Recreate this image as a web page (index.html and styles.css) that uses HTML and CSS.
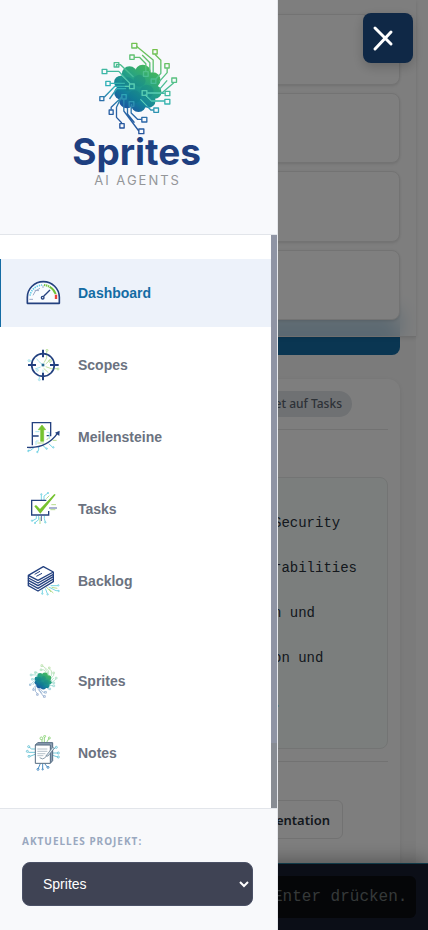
FILE: index.html
```html
<!DOCTYPE html>
<html lang="de">
<head>
<meta charset="utf-8">
<meta name="viewport" content="width=device-width, initial-scale=1">
<title>Sprites</title>
<link rel="stylesheet" href="styles.css">
</head>
<body>
<svg class="defs" aria-hidden="true">
  <defs>
    <linearGradient id="circuit" gradientUnits="userSpaceOnUse" x1="290" y1="50" x2="190" y2="300">
      <stop offset="0" stop-color="#7ac143"/><stop offset=".3" stop-color="#52c08a"/>
      <stop offset=".6" stop-color="#2fb0b8"/><stop offset=".8" stop-color="#2b68a8"/><stop offset="1" stop-color="#24509a"/>
    </linearGradient>
    <linearGradient id="brainfill" gradientUnits="userSpaceOnUse" x1="275" y1="115" x2="195" y2="230">
      <stop offset="0" stop-color="#43b75c"/><stop offset=".4" stop-color="#24a087"/>
      <stop offset=".75" stop-color="#127f9b"/><stop offset="1" stop-color="#1c58a0"/>
    </linearGradient>
    <g id="blob">
      <g fill="url(#brainfill)">
        <circle cx="210" cy="132" r="23"/><circle cx="250" cy="128" r="24"/><circle cx="280" cy="150" r="23"/>
        <circle cx="286" cy="186" r="20"/><circle cx="266" cy="212" r="22"/><circle cx="237" cy="223" r="23"/>
        <circle cx="202" cy="212" r="23"/><circle cx="184" cy="188" r="20"/><circle cx="184" cy="157" r="20"/>
        <circle cx="232" cy="174" r="52"/>
      </g>
      <g fill="#0d6f80" opacity=".22">
        <circle cx="205" cy="162" r="20"/><circle cx="240" cy="152" r="18"/><circle cx="262" cy="184" r="20"/><circle cx="225" cy="200" r="19"/>
      </g>
    </g>
    <g id="wires" fill="none" stroke="url(#circuit)" stroke-linejoin="round">
      <path d="M231 49L281 90V128M286 73L304 91V130L289 147M223 82H240L259 101V124M248 75L271 98V122M323 115V128L300 154M323 151L300 178M343 158L307 189H263M316 190L263 189M316 213H276L257 193M171 111V104H183L222 141M142 124H178L212 161M153 160H196M210 169H166L134 202M200 176H172L150 207M188 200L155 232V239M186 200L171 232V262L187 279M193 207V243L238 303M204 234V252L225 278M215 229V249L234 268H247M243 208L274 240H283M216 222V236"/>
      <rect x="217" y="40" width="15" height="14"/><rect x="280" y="59" width="13" height="13"/>
      <rect x="211" y="75" width="13" height="13"/><rect x="252" y="125" width="14" height="14"/>
      <rect x="316" y="101" width="13" height="13"/><rect x="337" y="144" width="14" height="13"/>
      <rect x="275" y="147" width="14" height="13"/><rect x="164" y="98" width="14" height="13"/>
      <rect x="128" y="118" width="14" height="13"/><rect x="139" y="154" width="13" height="13"/>
      <rect x="210" y="162" width="14" height="14"/><rect x="248" y="182" width="14" height="14"/>
      <rect x="317" y="184" width="14" height="13"/><rect x="316" y="208" width="15" height="14"/>
      <rect x="283" y="234" width="14" height="13"/><rect x="247" y="262" width="15" height="14"/>
      <rect x="121" y="200" width="12" height="12"/><rect x="187" y="194" width="13" height="13"/>
      <rect x="209" y="215" width="14" height="14"/><rect x="149" y="240" width="12" height="13"/>
      <rect x="181" y="281" width="13" height="13"/><rect x="238" y="297" width="15" height="14"/>
    </g>
  </defs>
</svg>

<header class="topbar">
  <div class="stats">
    <div class="stat"></div><div class="stat"></div><div class="stat"></div><div class="stat"></div>
  </div>
</header>

<main class="page">
  <div class="action"></div>
  <section class="card">
    <div class="card-head"><span class="pill">tet auf Tasks</span></div>
    <div class="listing">
      <p>Security</p>
      <p>rabilities</p>
      <p>n und</p>
      <p>on und</p>
      <p class="mark">.</p>
    </div>
    <div class="card-foot"><button class="chip" type="button">entation</button></div>
  </section>
</main>

<footer class="console">
  <input class="console-input" type="text" placeholder="Enter drücken." aria-label="Enter drücken.">
</footer>

<div class="overlay"></div>

<aside class="drawer">
  <div class="brand">
    <svg class="brand-mark" viewBox="101 36 260 279" aria-hidden="true">
      <use href="#blob"/>
      <use href="#wires" stroke-width="4"/>
      <g fill="none" stroke="#5fd0b0" stroke-width="3">
        <path d="M212 161L184 134M196 169H210M263 189H304M257 196L276 213H300M243 208L262 228"/>
        <rect x="210" y="162" width="14" height="14"/><rect x="248" y="182" width="14" height="14"/>
      </g>
    </svg>
    <div class="brand-name">Sprites</div>
    <div class="brand-sub">AI AGENTS</div>
  </div>

  <div class="nav-wrap">
    <nav class="nav">
      <a class="item active" href="#dashboard">
        <svg class="icon" viewBox="75 150 108 108" fill="none" aria-hidden="true">
          <path d="M82 235V217A47 46 0 0 1 178 217V235Z" fill="#f8fbff" stroke="#24417f" stroke-width="5" stroke-linejoin="round"/>
          <path d="M90 212A39 38 0 0 1 126 180" stroke="#62cbe6" stroke-width="5" stroke-dasharray="4 3"/>
          <path d="M99 211A30 30 0 0 1 120 190M104 196L117 197M88 223H99M129 181V189" stroke="#9aa8c8" stroke-width="3"/>
          <path d="M132 180A39 38 0 0 1 151 187" stroke="#79c642" stroke-width="6" stroke-dasharray="4 2"/>
          <path d="M150 186A39 38 0 0 1 167 207" stroke="#6fc136" stroke-width="6"/>
          <path d="M168 209V222" stroke="#ec4138" stroke-width="7"/>
          <path d="M131 214L150 195" stroke="#24417f" stroke-width="4"/>
          <circle cx="128" cy="218" r="4" fill="#f8fbff" stroke="#24417f" stroke-width="4"/>
        </svg>
        <span>Dashboard</span>
      </a>
      <a class="item" href="#scopes">
        <svg class="icon" viewBox="75 366 108 108" fill="none" aria-hidden="true">
          <g stroke="#a9e4ee" stroke-width="3">
            <path d="M129 420L116 409L110 401M122 426L105 432M129 434V449L118 456V464M98 408H86"/>
            <circle cx="87" cy="407" r="3"/><circle cx="118" cy="464" r="3"/><circle cx="112" cy="436" r="3"/>
          </g>
          <g stroke="#bfe3a0" stroke-width="3">
            <path d="M132 413L140 399V378M137 417L150 405M137 425L154 431H174M131 430L145 443"/>
            <circle cx="141" cy="376" r="3"/><circle cx="174" cy="432" r="3"/><circle cx="150" cy="408" r="4"/>
          </g>
          <circle cx="129" cy="420" r="34" stroke="#22407f" stroke-width="5"/>
          <path d="M129 374V397M129 443V466M84 420H108M150 420H176" stroke="#22407f" stroke-width="6"/>
          <rect x="125" y="416" width="8" height="8" fill="#236b8e"/>
        </svg>
        <span>Scopes</span>
      </a>
      <a class="item" href="#meilensteine">
        <svg class="icon" viewBox="75 72 108 108" fill="none" aria-hidden="true">
          <path d="M97 151V83H152V122H140M97 123H116" stroke="#24417f" stroke-width="4"/>
          <path d="M118 110H106M140 112H148V132M116 138H108V150" stroke="#a9e4ee" stroke-width="3"/>
          <path d="M122 139V104H115L126 90L137 104H131V139Z" fill="#76c22f" stroke="#76c22f" stroke-width="2"/>
          <path d="M112 144H132M140 135L146 128M158 136H170" stroke="#b7dd8f" stroke-width="3"/>
          <g stroke="#71d2e4" stroke-width="3">
            <path d="M104 156L92 166H84M116 156V165L112 171M127 150L138 160M146 146L158 157"/>
            <circle cx="85" cy="168" r="2"/><circle cx="112" cy="171" r="2"/><circle cx="140" cy="161" r="2"/><circle cx="160" cy="157" r="2"/>
          </g>
          <path d="M81 157C119 160 151 146 174 113" stroke="#24417f" stroke-width="4"/>
          <path d="M165 113L179 107L178 123Z" fill="#24417f"/>
        </svg>
        <span>Meilensteine</span>
      </a>
      <a class="item" href="#tasks">
        <svg class="icon" viewBox="75 288 108 108" fill="none" aria-hidden="true">
          <g stroke="#7bd6e4" stroke-width="3">
            <path d="M124 315V299M132 315V303L144 294M109 363V371L96 378M116 363V374L105 383M133 363V371L136 382"/>
            <circle cx="124" cy="298" r="2"/><circle cx="144" cy="294" r="2"/><circle cx="96" cy="377" r="2"/><circle cx="105" cy="384" r="2"/><circle cx="136" cy="382" r="2"/>
          </g>
          <path d="M139 311L148 302M120 367V387M154 329H168M151 344H166" stroke="#b7dd8f" stroke-width="3"/>
          <path d="M146 348V360H95V316H139" stroke="#24417f" stroke-width="4"/>
          <path d="M124 360V378M147 339H171" stroke="#5267a0" stroke-width="3"/>
          <path d="M103 334Q108 328 112 334L120 342L163 297L167 299L121 356Z" fill="#76c22f"/>
        </svg>
        <span>Tasks</span>
      </a>
      <a class="item" href="#backlog">
        <svg class="icon" viewBox="75 504 108 108" fill="none" aria-hidden="true">
          <g stroke="#7bd6e4" stroke-width="3">
            <path d="M152 572H174M146 576L168 587H176M136 580L142 596M127 584V595"/>
            <circle cx="175" cy="571" r="2"/><circle cx="176" cy="588" r="2"/><circle cx="143" cy="598" r="2"/><circle cx="127" cy="596" r="2"/>
          </g>
          <path d="M147 582L160 594M155 577L172 580M138 575L153 591" stroke="#b7dd8f" stroke-width="3"/>
          <g fill="#fff" stroke="#24417f" stroke-width="4" stroke-linejoin="round">
            <path d="M85 564V572L114 588L160 560V552"/>
            <path d="M85 556V564L114 580L160 552V545"/>
            <path d="M85 549V556L114 572L160 545V538"/>
            <path d="M85 542V549L114 564L160 538V531"/>
            <path d="M85 541L130 515L160 531L114 556Z"/>
          </g>
          <path d="M104 538L120 529M109 544L126 535" stroke="#24417f" stroke-width="3"/>
        </svg>
        <span>Backlog</span>
      </a>
      <a class="item item-gap" href="#sprites">
        <svg class="icon" viewBox="84 25 300 300" fill="none" aria-hidden="true">
          <use href="#wires" stroke-width="6" opacity=".55"/>
          <use href="#blob"/>
        </svg>
        <span>Sprites</span>
      </a>
      <a class="item" href="#notes">
        <svg class="icon" viewBox="75 285 108 108" fill="none" aria-hidden="true">
          <g stroke="#96d884" stroke-width="3">
            <path d="M126 307V297M133 307V291M140 307L147 295"/>
            <circle cx="124" cy="295" r="4"/><circle cx="134" cy="289" r="3"/><circle cx="148" cy="294" r="3"/>
          </g>
          <g stroke="#72c7d8" stroke-width="3">
            <path d="M105 327H95L87 321M105 337H85M105 343L90 349M158 328L167 323M158 339H173M158 346L173 351"/>
            <circle cx="86" cy="320" r="3"/><circle cx="82" cy="334" r="3"/><circle cx="87" cy="349" r="3"/>
            <circle cx="169" cy="322" r="3"/><circle cx="175" cy="339" r="3"/><circle cx="175" cy="351" r="3"/>
          </g>
          <g stroke="#4b8ec4" stroke-width="3">
            <path d="M121 371L114 387M128 371V388M134 371L143 382"/>
            <circle cx="114" cy="388" r="3"/><circle cx="128" cy="388" r="2"/><circle cx="144" cy="382" r="3"/>
          </g>
          <path d="M106 315L113 308H158V362L151 370" fill="#8da0b4" stroke="#52697f" stroke-width="3"/>
          <path d="M106 315H151V370H106Z" fill="#fff" stroke="#52697f" stroke-width="3"/>
          <path d="M112 327H142M112 334H142M112 341H136M112 347H130" stroke="#93a3b1" stroke-width="2"/>
          <path d="M119 353Q128 361 137 352" stroke="#52697f" stroke-width="2"/>
          <path d="M137 349L158 322L163 325L144 348Z" fill="#dce7ef" stroke="#52697f" stroke-width="2"/>
        </svg>
        <span>Notes</span>
      </a>
    </nav>
    <div class="scrollbar"></div>
  </div>

  <div class="project">
    <label class="project-label" for="project">Aktuelles Projekt:</label>
    <select class="project-select" id="project"><option>Sprites</option></select>
  </div>
</aside>

<button class="close" type="button" aria-label="Schließen">
  <svg class="close-icon" viewBox="0 0 24 28" aria-hidden="true">
    <path d="M4 4L20 20M4 25L20 8" fill="none" stroke="#fff" stroke-width="3" stroke-linecap="round"/>
  </svg>
</button>
</body>
</html>
```
FILE: styles.css
```css
* { box-sizing: border-box; }

body {
  margin: 0;
  background: #fdfdfd;
  font-family: "Noto Sans", sans-serif;
  color: #28303a;
}

.defs { position: absolute; width: 0; height: 0; }

/* Page behind the drawer */
.topbar {
  position: fixed;
  top: 0;
  left: 12px;
  right: 12px;
  z-index: 2;
  padding: 14px 16px 16px;
  background: rgba(255, 255, 255, .7);
  border-bottom: 1px solid #dedede;
  box-shadow: 0 1px 4px rgba(0, 0, 0, .12);
  backdrop-filter: blur(10px);
}

.stats {
  display: grid;
  grid-template-rows: repeat(4, 1fr);
  gap: 8px;
  min-height: 306px;
}

.stat {
  background: #fff;
  border: 1px solid #e6e6e6;
  border-radius: 8px;
  box-shadow: 0 1px 3px rgba(0, 0, 0, .12);
}

.page {
  display: flex;
  flex-direction: column;
  min-height: 100vh;
  margin: 0 12px;
  padding: 311px 16px 0;
  background: #f6f6f6;
}

.action {
  height: 44px;
  margin-bottom: 24px;
  border-radius: 0 0 8px 8px;
  background: #146ca4;
}

.card {
  flex: 1;
  padding: 12px;
  background: #fdfdfd;
  border-radius: 12px 12px 0 0;
  box-shadow: 0 1px 4px rgba(0, 0, 0, .08);
}

.card-head {
  display: flex;
  justify-content: flex-end;
  padding: 0 36px 12px 0;
  margin-bottom: 47px;
  border-bottom: 1px solid #e4e4e4;
}

.pill {
  padding: 0 10px;
  border-radius: 13px;
  background: #dee2e6;
  color: #5a646f;
  font-size: 12px;
  font-weight: 500;
  line-height: 26px;
  white-space: nowrap;
}

.listing {
  padding: 23px 0 22px 232px;
  border: 1px solid #e6e9e8;
  border-radius: 8px;
  background: #f6fdfa;
  font-family: "Liberation Mono", monospace;
  font-size: 14px;
  line-height: 45px;
  white-space: nowrap;
}

.listing p { margin: 0; }
.mark { color: #146ca4; }

.card-foot {
  display: flex;
  justify-content: flex-end;
  margin-top: 12px;
  padding: 38px 45px 0 0;
  border-top: 1px solid #e4e4e4;
}

.chip {
  height: 39px;
  padding: 0 12px;
  border: 1px solid #e4e4e4;
  border-radius: 6px;
  background: #fdfdfd;
  color: #28303a;
  font: 600 13px "Noto Sans", sans-serif;
}

.console {
  position: fixed;
  left: 0;
  right: 0;
  bottom: 0;
  z-index: 3;
  padding: 12px;
  background: #161c2e;
  border-top: 1px solid #20728f;
  box-shadow: 0 -4px 16px rgba(0, 0, 0, .3);
}

.console-input {
  display: block;
  width: 100%;
  height: 42px;
  padding: 0 4px 0 261px;
  border: 0;
  border-radius: 6px;
  background: #0a0c10;
  color: #6b7272;
  font: 16px "Liberation Mono", monospace;
}

.console-input::placeholder { color: #6b7272; }

.overlay {
  position: fixed;
  inset: 0;
  z-index: 4;
  background: rgba(0, 0, 0, .5);
}

/* Drawer */
.drawer {
  position: fixed;
  top: 0;
  bottom: 0;
  left: 0;
  z-index: 5;
  display: flex;
  flex-direction: column;
  width: 65%;
  background: #fff;
  border-right: 1px solid #e5e7eb;
}

.brand {
  display: flex;
  flex-direction: column;
  align-items: center;
  min-height: 235px;
  padding: 42px 4px 0 0;
  background: #f8f9fc;
  border-bottom: 1px solid #e2e5ea;
}

.brand-mark { width: 87px; height: 93px; }

.brand-name {
  color: #1e3f80;
  font-family: Inter, sans-serif;
  font-size: 37px;
  font-weight: 700;
  line-height: 34px;
}

.brand-sub {
  padding-left: 2px;
  color: #949699;
  font-family: Inter, sans-serif;
  font-size: 13px;
  letter-spacing: 2px;
  line-height: 22px;
}

.nav-wrap { display: flex; flex: 1; min-height: 0; }

.nav {
  flex: 1;
  padding-top: 24px;
  overflow: hidden;
}

.item {
  display: flex;
  align-items: center;
  gap: 17px;
  height: 68px;
  margin-bottom: 4px;
  padding-left: 24px;
  border-left: 1px solid transparent;
  color: #6b7280;
  font-family: "Liberation Sans", Arial, sans-serif;
  font-size: 14px;
  font-weight: 700;
  text-decoration: none;
}

.item-gap { margin-top: 32px; }

.active {
  background: #edf2fa;
  border-left-color: #146ca4;
  color: #146ca4;
}

.icon { width: 36px; height: 36px; }

.scrollbar {
  width: 6px;
  background: linear-gradient(#8f94a4 0 508px, #888c93 508px);
}

.project {
  display: flex;
  flex-direction: column;
  gap: 12px;
  padding: 24px 24px 24px 22px;
  background: #f8f9fb;
  border-top: 1px solid #e2e5ea;
}

.project-label {
  color: #9aa8bf;
  font-size: 10px;
  font-weight: 700;
  letter-spacing: 1px;
  line-height: 17px;
  text-transform: uppercase;
}

.project-select {
  width: 100%;
  height: 44px;
  padding: 0 16px;
  border: 1px solid #4b5166;
  border-radius: 8px;
  background-color: #3f4354;
  color: #fff;
  font: 14px "Liberation Sans", Arial, sans-serif;
}

.close {
  position: fixed;
  top: 13px;
  right: 15px;
  z-index: 6;
  display: flex;
  align-items: center;
  width: 50px;
  height: 50px;
  padding: 0 0 0 8px;
  border: 0;
  border-radius: 8px;
  background: #0f2846;
  box-shadow: 0 4px 12px rgba(0, 0, 0, .2);
}

.close-icon { width: 24px; height: 28px; }
```
